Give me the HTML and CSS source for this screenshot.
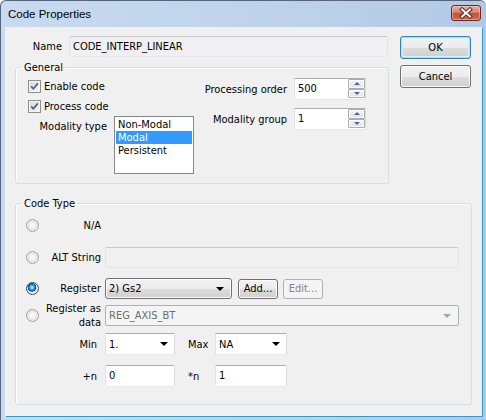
FILE: index.html
```html
<!DOCTYPE html>
<html>
<head>
<meta charset="utf-8">
<link rel="stylesheet" href="styles.css">
</head>
<body>
<div class="window">
  <div class="titlebar">
    <span class="title">Code Properties</span>
    <span class="close">
      <svg width="30" height="16" viewBox="0 0 30 16">
        <path d="M11 4.5 L19 11.5 M19 4.5 L11 11.5" stroke="#5b2a22" stroke-width="4" stroke-linecap="square"/>
        <path d="M11 4.5 L19 11.5 M19 4.5 L11 11.5" stroke="#ffffff" stroke-width="2" stroke-linecap="square"/>
      </svg>
    </span>
  </div>
  <div class="client">
    <div class="top">
      <div class="left-col">
        <div class="name-row">
          <span class="name-label">Name</span>
          <div class="edit readonly name-edit">CODE_INTERP_LINEAR</div>
        </div>
        <fieldset class="group general">
          <legend>General</legend>
          <div class="general-body">
            <div class="gen-left">
              <div class="check-row"><span class="checkbox"><svg width="13" height="13" viewBox="0 0 13 13"><path d="M3.2 6.4 L5.4 8.8 L9.8 3.4" fill="none" stroke="#4c5f86" stroke-width="1.7"/></svg></span>Enable code</div>
              <div class="check-row"><span class="checkbox"><svg width="13" height="13" viewBox="0 0 13 13"><path d="M3.2 6.4 L5.4 8.8 L9.8 3.4" fill="none" stroke="#4c5f86" stroke-width="1.7"/></svg></span>Process code</div>
              <div class="modality-row">
                <span class="modality-label">Modality type</span>
                <div class="listbox">
                  <div class="item">Non-Modal</div>
                  <div class="item selected">Modal</div>
                  <div class="item">Persistent</div>
                </div>
              </div>
            </div>
            <div class="gen-right">
              <span class="spin-label">Processing order</span>
              <div class="spin"><span class="spin-value">500</span><span class="spin-btns"><span class="sbtn"><i class="up"></i></span><span class="sbtn"><i class="down"></i></span></span></div>
              <span class="spin-label">Modality group</span>
              <div class="spin"><span class="spin-value">1</span><span class="spin-btns"><span class="sbtn"><i class="up"></i></span><span class="sbtn"><i class="down"></i></span></span></div>
            </div>
          </div>
        </fieldset>
      </div>
      <div class="buttons">
        <div class="btn default">OK</div>
        <div class="btn">Cancel</div>
      </div>
    </div>
    <fieldset class="group codetype">
      <legend>Code Type</legend>
      <div class="ct-body">
        <div class="ct-row row-na">
          <span class="radio"></span>
          <span class="ct-label">N/A</span>
        </div>
        <div class="ct-row row-alt">
          <span class="radio"></span>
          <span class="ct-label">ALT String</span>
          <div class="edit readonly wide"></div>
        </div>
        <div class="ct-row row-reg">
          <span class="radio on"></span>
          <span class="ct-label">Register</span>
          <div class="combo list reg-combo"><span>2) Gs2</span><i class="arrow"></i></div>
          <div class="btn small">Add...</div>
          <div class="btn small disabled">Edit...</div>
        </div>
        <div class="ct-row row-data">
          <span class="radio"></span>
          <span class="ct-label two">Register as<br>data</span>
          <div class="combo disabled wide"><span>REG_AXIS_BT</span><i class="arrow"></i></div>
        </div>
        <div class="ct-row row-min">
          <span class="radio-space"></span>
          <span class="ct-label inner">Min</span>
          <div class="combo edit-combo minc"><span>1.</span><i class="arrow"></i></div>
          <span class="mx-label">Max</span>
          <div class="combo edit-combo maxc"><span>NA</span><i class="arrow"></i></div>
        </div>
        <div class="ct-row row-n">
          <span class="radio-space"></span>
          <span class="ct-label inner">+n</span>
          <div class="edit white minc">0</div>
          <span class="mx-label">*n</span>
          <div class="edit white maxc">1</div>
        </div>
      </div>
    </fieldset>
  </div>
</div>
</body>
</html>
```

FILE: styles.css
```css
* { box-sizing: border-box; }
html, body { margin: 0; padding: 0; }
body {
  width: 486px;
  height: 420px;
  overflow: hidden;
  background: #ffffff;
  font-family: Tahoma, "DejaVu Sans Condensed", "Liberation Sans", sans-serif;
  font-size: 11px;
  line-height: 13px;
  color: #000;
}
.window {
  width: 486px;
  height: 420px;
  display: flex;
  flex-direction: column;
  background: linear-gradient(90deg, #c8daef 0%, #bdd2ea 60%, #b2c9e6 100%);
  border: 1px solid #566579;
  border-bottom: none;
  border-right: none;
  border-radius: 6px 6px 0 0;
  padding: 0 4px 4px 4px;
}
.titlebar {
  height: 26px;
  display: flex;
  align-items: flex-start;
  justify-content: space-between;
  padding-left: 3px;
}
.title {
  font-family: "Segoe UI", "Liberation Sans", sans-serif;
  font-size: 11.5px;
  line-height: 16px;
  margin-top: 5px;
  color: #000;
}
.close {
  width: 30px;
  height: 16px;
  margin-top: 4px;
  margin-right: 1px;
  border: 1px solid #6b2b24;
  border-radius: 3px;
  background: linear-gradient(#e9a99b 0%, #dc8774 45%, #c75136 50%, #cd6a4e 100%);
  box-shadow: inset 0 0 0 1px rgba(255,255,255,0.35);
  display: flex;
  align-items: center;
  justify-content: center;
}
.close svg { display: block; margin: -1px; }
.client {
  flex: 1;
  background: #f0f0f0;
  padding: 9px 0 0 10px;
  box-shadow: 1px 1px 0 #2f9bd0;
}
.top { display: flex; }
.left-col { width: 374px; }
.name-row {
  display: flex;
  align-items: center;
  height: 21px;
}
.name-label { width: 47px; text-align: right; margin-right: 7px; }
.edit {
  height: 21px;
  border: 1px solid #abadb3;
  border-color: #abadb3 #dbdfe6 #e3e9ef #e2e3ea;
  border-radius: 2px;
  background: #fff;
  padding: 3px 3px 0 3px;
  white-space: nowrap;
}
.edit.readonly { background: #f0f0f0; border-color: #c9cbd0 #e2e4e8 #e3e7ec #e2e3ea; }
.name-edit { width: 319px; }
.group {
  margin: 0;
  padding: 0;
  min-width: 0;
  border: 1px solid #d5dfe5;
  border-radius: 3px;
  box-shadow: inset 1px 1px 0 #fff;
}
.group legend {
  padding: 0 2px;
  margin-left: 6px;
  line-height: 13px;
}
.general { margin-top: 4px; }
.general-body {
  display: flex;
  padding: 0 22px 9px 12px;
}
.gen-left { padding-top: 2px; }
.check-row {
  height: 20px;
  display: flex;
  align-items: center;
  gap: 3px;
}
.checkbox {
  width: 13px;
  height: 13px;
  border: 1px solid #8e8f8f;
  background: linear-gradient(135deg, #d8d8d8, #f7f7f7);
  box-shadow: inset 0 0 0 1px #f4f4f4;
}
.checkbox svg { display: block; margin: -1px; }
.modality-row { display: flex; }
.modality-label {
  width: 79px;
  text-align: right;
  white-space: nowrap;
  padding-top: 4px;
  margin-right: 7px;
}
.listbox {
  width: 80px;
  height: 58px;
  border: 1px solid #828790;
  background: #fff;
  padding: 1px 1px 0 1px;
}
.item { height: 13px; padding-left: 2px; }
.item.selected { background: #3399ff; color: #fff; }
.gen-right {
  margin-left: auto;
  padding-top: 4px;
  display: grid;
  grid-template-columns: auto 72px;
  column-gap: 7px;
  row-gap: 8px;
  align-items: center;
  align-content: start;
}
.spin-label { text-align: right; }
.spin {
  height: 22px;
  border: 1px solid #abadb3;
  border-color: #abadb3 #dbdfe6 #e3e9ef #e2e3ea;
  background: #fff;
  display: flex;
  justify-content: space-between;
}
.spin-value { padding: 3px 0 0 3px; }
.spin-btns { display: flex; flex-direction: column; width: 17px; margin: 0 0 1px 0; }
.sbtn {
  height: 10px;
  border: 1px solid #a9acb2;
  border-radius: 1px;
  background: linear-gradient(#f6f6f6, #e2e2e2);
  box-shadow: inset 0 0 0 1px #fbfbfb;
  display: flex;
  align-items: center;
  justify-content: center;
}
.sbtn .up { width: 0; height: 0; border-left: 3px solid transparent; border-right: 3px solid transparent; border-bottom: 3px solid #4a68a6; }
.sbtn .down { width: 0; height: 0; border-left: 3px solid transparent; border-right: 3px solid transparent; border-top: 3px solid #4a68a6; }
.buttons {
  margin-left: 11px;
  width: 71px;
  display: flex;
  flex-direction: column;
  gap: 6px;
}
.btn {
  height: 23px;
  border: 1px solid #707070;
  border-radius: 3px;
  background: linear-gradient(#f2f2f2 0%, #ebebeb 50%, #dddddd 51%, #cfcfcf 100%);
  box-shadow: inset 0 0 0 1px #fcfcfc;
  display: flex;
  align-items: center;
  justify-content: center;
}
.btn.default { border-color: #3c7fb1; box-shadow: inset 0 0 0 1px #a3e4fb, inset 0 0 0 2px #d6f1fc; }
.btn.small { height: 20px; width: 40px; margin-left: 6px; }
.btn.disabled { border-color: #adb2b5; background: #f4f4f4; box-shadow: none; color: #838383; margin-left: 5px; }
.codetype {
  margin-top: 13px;
  width: 457px;
}
.ct-body { padding: 0 12px 17px 10px; }
.ct-row { display: flex; align-items: center; }
.row-na { margin-top: 4px; height: 22px; }
.row-alt { margin-top: 11px; height: 21px; }
.row-reg { margin-top: 10px; height: 21px; }
.row-data { margin-top: 6px; height: 21px; }
.row-min { margin-top: 7px; height: 22px; }
.row-n { margin-top: 10px; height: 22px; }
.radio, .radio-space { width: 13px; height: 13px; flex: none; }
.radio {
  border-radius: 50%;
  border: 1px solid #a2a2a2;
  background: radial-gradient(circle at 50% 50%, #f8f8f8 0 2.5px, #e2e2e2 4px, #d0d0d0 5.5px);
  box-shadow: inset 0 0 0 1px #f2f2f2;
}
.radio.on {
  border-color: #2a4e6e;
  background: radial-gradient(circle at 45% 40%, #9fe2ff 0 1px, #2a8cd0 2.5px, #0f4f84 4px, #dcdcdc 4.5px, #f0f0f0 6px);
  box-shadow: none;
}
.ct-label { width: 62px; text-align: right; margin-right: 4px; flex: none; white-space: nowrap; }
.ct-label.two { line-height: 14px; }
.ct-label.inner { padding-right: 4px; }
.wide { width: 354px; }
.combo {
  height: 21px;
  border: 1px solid #acacac;
  border-radius: 2px;
  display: flex;
  align-items: center;
  justify-content: space-between;
  padding: 0 7px 0 3px;
  background: #fff;
}
.combo .arrow {
  width: 0; height: 0;
  border-left: 4px solid transparent;
  border-right: 4px solid transparent;
  border-top: 4px solid #000;
}
.combo.list {
  border-color: #707070;
  border-radius: 3px;
  background: linear-gradient(#f2f2f2 0%, #ebebeb 50%, #dddddd 51%, #cfcfcf 100%);
  box-shadow: inset 0 0 0 1px #fcfcfc;
}
.reg-combo { width: 127px; }
.combo.disabled {
  background: #f4f4f4;
  border-color: #adb2b5;
  color: #6d6d6d;
}
.combo.disabled .arrow { border-top-color: #a6a6a6; }
.combo.edit-combo { height: 22px; border-color: #abadb3 #dbdfe6 #e3e9ef #e2e3ea; border-radius: 0; padding-right: 6px; }
.minc { width: 70px; height: 22px; }
.maxc { width: 72px; height: 22px; }
.mx-label { width: 27px; margin-left: 13px; flex: none; }
```
